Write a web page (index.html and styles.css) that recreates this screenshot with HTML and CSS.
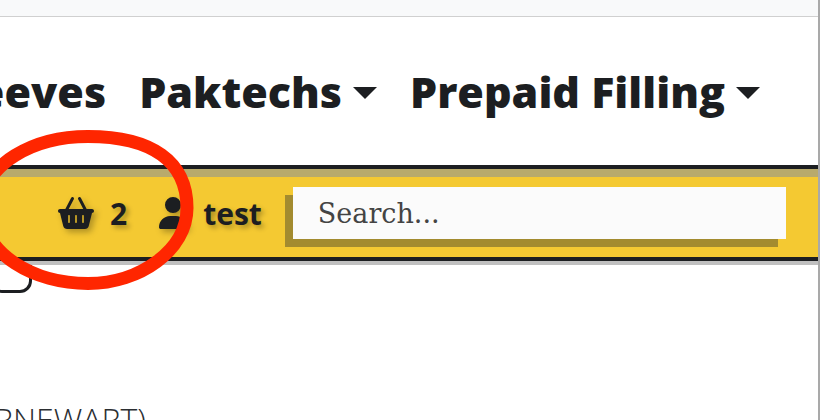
FILE: index.html
```html
<!DOCTYPE html>
<html>

<head>
  <title>Shop</title>
  <link rel="stylesheet" href="styles.css">
</head>

<body>
  <div class="topbar"></div>
  <nav class="menu">
    <a class="menu-item" href="#">Sleeves</a>
    <a class="menu-item has-caret" href="#">Paktechs</a>
    <a class="menu-item has-caret" href="#">Prepaid Filling</a>
  </nav>
  <section class="shopbar">
    <a class="shop-link" href="#">
      <svg class="basket" viewBox="0 0 576 512"><path d="M253.3 35.1c6.1-11.8 1.5-26.3-10.2-32.4s-26.3-1.5-32.4 10.2L117.6 192H32c-17.7 0-32 14.3-32 32s14.3 32 32 32L83.9 463.5C91 492 116.6 512 146 512H430c29.4 0 55-20 62.1-48.5L544 256c17.7 0 32-14.3 32-32s-14.3-32-32-32H458.4L365.3 12.9C359.2 1.2 344.7-3.4 332.9 2.7s-16.3 20.6-10.2 32.4L404.3 192H171.7L253.3 35.1zM192 304v96c0 8.8-7.2 16-16 16s-16-7.2-16-16V304c0-8.8 7.2-16 16-16s16 7.2 16 16zm96-16c8.8 0 16 7.2 16 16v96c0 8.8-7.2 16-16 16s-16-7.2-16-16V304c0-8.8 7.2-16 16-16zm128 16v96c0 8.8-7.2 16-16 16s-16-7.2-16-16V304c0-8.8 7.2-16 16-16s16 7.2 16 16z"/></svg>
      <span>2</span>
    </a>
    <a class="shop-link user-link" href="#">
      <svg class="user" viewBox="0 0 448 512"><path d="M224 256A128 128 0 1 0 224 0a128 128 0 1 0 0 256zm-45.7 48C79.8 304 0 383.8 0 482.3C0 498.7 13.3 512 29.7 512H418.3c16.4 0 29.7-13.3 29.7-29.7C448 383.8 368.2 304 269.7 304H178.3z"/></svg>
      <span>test</span>
    </a>
    <input class="search" type="text" placeholder="Search...">
  </section>
  <div class="dropdown-box"></div>
  <h2 class="title">RNEWART)</h2>

  <!-- red circle drawn over the screenshot -->
  <svg class="scribble" viewBox="0 0 240 170"><path d="M128 11.5C192 11.5 227 36.5 227 83C227 125 180 158.5 128 158.5C75 158.5 22 130 22 83C22 38 75 11.5 128 11.5Z"/></svg>
</body>

</html>
```

FILE: styles.css
```css
* {
  margin: 0;
  padding: 0;
  box-sizing: border-box;
}

:root {
  --dark: #1c1e21;
  --yellow: #f4c932;
}

html, body {
  height: 420px;
  overflow: hidden;
}

body {
  position: relative;
  width: 820px;
  background-color: #fff;
  color: var(--dark);
  font-family: "Open Sans", sans-serif;
  border-right: 2px solid #a9a9a9;
}

.topbar {
  height: 17px;
  background-color: #f8f9fa;
  border-bottom: 1px solid #d0d0d0;
}

.menu {
  display: flex;
  justify-content: flex-end;
  align-items: center;
  gap: 33px;
  height: 148px;
  padding-right: 58px;
  white-space: nowrap;
}

.menu-item {
  color: var(--dark);
  font-size: 43px;
  font-weight: 800;
  text-decoration: none;
}

.has-caret::after {
  content: "";
  display: inline-block;
  margin-left: 11px;
  vertical-align: 9px;
  border-top: 12px solid var(--dark);
  border-left: 12px solid transparent;
  border-right: 12px solid transparent;
}

.shopbar {
  position: relative;
  z-index: 1;
  display: flex;
  align-items: center;
  height: 96px;
  padding-left: 58px;
  background-color: var(--yellow);
  border-top: 4px solid var(--dark);
  border-bottom: 4px solid var(--dark);
  box-shadow: inset 0 8px 0 #b8aa6c, 0 4px 0 #c0c0c0;
}

.shop-link {
  display: flex;
  align-items: center;
  gap: 16px;
  color: var(--dark);
  font-size: 30px;
  font-weight: 700;
  text-decoration: none;
  text-shadow: 3px 3px 5px rgba(0, 0, 0, 0.3);
}

.user-link {
  margin-left: 32px;
}

.basket {
  width: 36px;
  height: 32px;
  fill: var(--dark);
  filter: drop-shadow(3px 3px 3px rgba(0, 0, 0, 0.3));
}

.user {
  width: 28px;
  height: 32px;
  fill: var(--dark);
  filter: drop-shadow(3px 3px 3px rgba(0, 0, 0, 0.3));
}

.search {
  width: 493px;
  height: 52px;
  margin-left: 31px;
  padding-left: 25px;
  background-color: #fbfbfb;
  border: none;
  outline: none;
  box-shadow: -8px 8px 0 #a38b2f;
  color: #444;
  font-family: "DejaVu Serif", serif;
  font-size: 27px;
}

.search::placeholder {
  color: #444;
  opacity: 1;
}

.dropdown-box {
  width: 42px;
  height: 36px;
  margin-top: -4px;
  margin-left: -10px;
  border: 3px solid var(--dark);
  border-radius: 0 0 12px 12px;
}

.title {
  margin-top: 104px;
  margin-left: -6px;
  color: #2b2e32;
  font-size: 32px;
  font-weight: 300;
  white-space: nowrap;
}

.scribble {
  position: absolute;
  left: -40px;
  top: 125px;
  z-index: 2;
  width: 240px;
  height: 170px;
  fill: none;
  stroke: #ff2600;
  stroke-width: 13;
}
```
